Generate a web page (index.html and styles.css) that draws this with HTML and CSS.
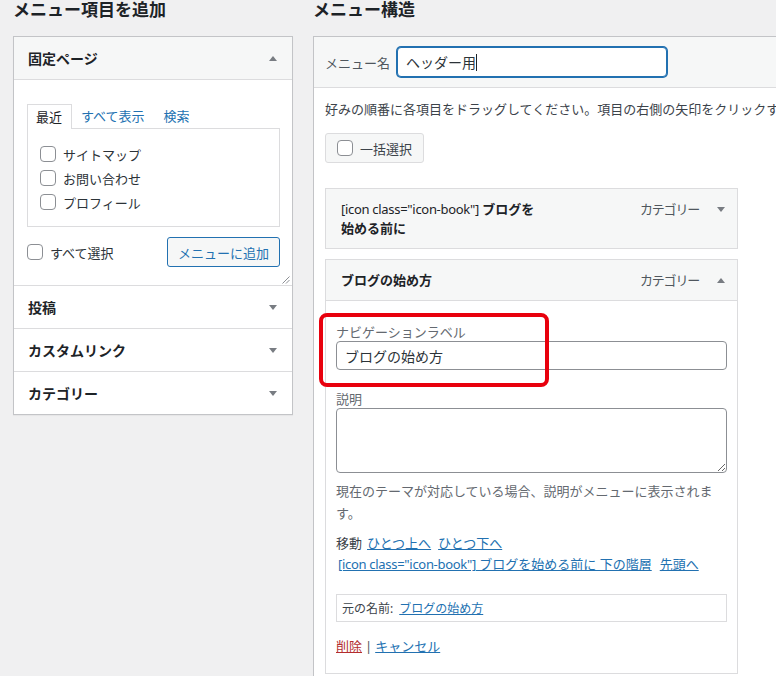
FILE: index.html
```html
<!DOCTYPE html>
<html lang="ja">
<head>
<meta charset="utf-8">
<title>メニュー</title>
<link rel="stylesheet" href="styles.css">
</head>
<body>
<div class="page">
  <div class="col-left">
    <h2 class="heading">メニュー項目を追加</h2>
    <div class="acc">
      <div class="acc-head open"><span>固定ページ</span><span class="tri up"></span></div>
      <div class="acc-body">
        <ul class="tabs">
          <li class="tab active">最近</li>
          <li class="tab"><a class="tab-link">すべて表示</a></li>
          <li class="tab"><a class="tab-link">検索</a></li>
        </ul>
        <div class="tab-panel">
          <label class="chk-row"><span class="cb"></span>サイトマップ</label>
          <label class="chk-row"><span class="cb"></span>お問い合わせ</label>
          <label class="chk-row"><span class="cb"></span>プロフィール</label>
        </div>
        <div class="add-actions">
          <label class="chk-row"><span class="cb"></span>すべて選択</label>
          <button class="btn-add">メニューに追加</button>
        </div>
        <svg class="grip" width="8" height="8" viewBox="0 0 8 8"><path d="M7.5 0.5 L0.5 7.5 M7.5 4 L4 7.5" stroke="#8c8f94" stroke-width="1" fill="none"/></svg>
      </div>
      <div class="acc-head"><span>投稿</span><span class="tri down"></span></div>
      <div class="acc-head"><span>カスタムリンク</span><span class="tri down"></span></div>
      <div class="acc-head last"><span>カテゴリー</span><span class="tri down"></span></div>
    </div>
  </div>

  <div class="col-right">
    <h2 class="heading">メニュー構造</h2>
    <div class="menu-box">
      <div class="menu-head">
        <span class="menu-name-label">メニュー名</span>
        <div class="menu-name-input">ヘッダー用<span class="caret"></span></div>
      </div>
      <div class="menu-body">
        <p class="drag-hint">好みの順番に各項目をドラッグしてください。項目の右側の矢印をクリックすると、追加の設定オプションが表示されます。</p>
        <div class="bulk-btn"><span class="cb"></span>一括選択</div>

        <div class="item">
          <div class="item-head">
            <div class="item-title"><span class="latin">[icon class="icon-book"]</span> ブログを<br>始める前に</div>
            <span class="item-type">カテゴリー</span>
            <span class="tri down"></span>
          </div>
        </div>

        <div class="item second">
          <div class="item-head">
            <div class="item-title">ブログの始め方</div>
            <span class="item-type">カテゴリー</span>
            <span class="tri up"></span>
          </div>
          <div class="item-panel">
            <div class="field-label">ナビゲーションラベル</div>
            <div class="text-input">ブログの始め方</div>
            <div class="field-label gap">説明</div>
            <textarea class="textarea"></textarea>
            <p class="desc">現在のテーマが対応している場合、説明がメニューに表示されます。</p>
            <div class="move">
              <div class="move-line"><span class="move-label">移動</span><a class="link l-gap">ひとつ上へ</a><a class="link">ひとつ下へ</a></div>
              <div class="move-line indent"><a class="link"><span class="latin-s">[icon class="icon-book"]</span> ブログを始める前に 下の階層</a><a class="link l-gap2">先頭へ</a></div>
            </div>
            <div class="orig">元の名前:<a class="link orig-link">ブログの始め方</a></div>
            <div class="item-actions"><a class="link del">削除</a><span class="sep">|</span><a class="link">キャンセル</a></div>
            <div class="highlight"></div>
          </div>
        </div>
      </div>
    </div>
  </div>
</div>
</body>
</html>
```

FILE: styles.css
```css
html, body {
  margin: 0;
  padding: 0;
  overflow: hidden;
  background: #f0f0f1;
}

body {
  font-family: "Noto Sans", "Noto Sans CJK JP", sans-serif;
  font-size: 13px;
  color: #1d2327;
  width: 776px;
  height: 676px;
}

.page {
  display: flex;
  align-items: flex-start;
  padding-left: 13px;
  gap: 20px;
}

.heading {
  margin: 0 0 16px;
  font-size: 17px;
  line-height: 20px;
  font-weight: 700;
  color: #1d2327;
}

/* ---------- left column ---------- */
.col-left {
  width: 280px;
  flex: none;
}

.acc {
  background: #fff;
  border: 1px solid #c3c4c7;
  box-shadow: 0 1px 1px rgba(0, 0, 0, 0.04);
}

.acc-head {
  height: 42px;
  display: flex;
  align-items: center;
  justify-content: space-between;
  padding: 0 15px 0 14px;
  border-bottom: 1px solid #dcdcde;
  font-size: 14px;
  font-weight: 700;
  color: #1d2327;
  background: #fff;
}

.acc-head.open {
  background: #f6f7f7;
}

.acc-head.last {
  border-bottom: none;
}

.tri {
  display: inline-block;
  width: 0;
  height: 0;
  border-left: 4px solid transparent;
  border-right: 4px solid transparent;
}

.tri.up {
  border-bottom: 5px solid #787c82;
}

.tri.down {
  border-top: 5px solid #787c82;
}

.acc-body {
  position: relative;
  padding: 24px 12px 18px 13px;
  border-bottom: 1px solid #dcdcde;
}

.tabs {
  display: flex;
  margin: 0;
  padding: 0;
  list-style: none;
}

.tab {
  padding: 0 10px 0 9px;
  line-height: 24px;
  font-size: 13px;
}

.tab.active {
  padding: 0 9px 0 8px;
  border: 1px solid #dcdcde;
  border-bottom: none;
  background: #fff;
  position: relative;
  margin-bottom: -1px;
  line-height: 24px;
  color: #1d2327;
}

.tab-link {
  color: #2271b1;
}

.tab-panel {
  border: 1px solid #dcdcde;
  padding: 13px 12px 12px;
}

.chk-row {
  display: flex;
  align-items: center;
  gap: 7px;
  height: 24px;
  font-size: 13px;
  color: #2c3338;
}

.cb {
  display: inline-block;
  box-sizing: border-box;
  width: 16px;
  height: 16px;
  border: 1px solid #8c8f94;
  border-radius: 4px;
  background: #fff;
  flex: none;
}

.add-actions {
  display: flex;
  align-items: center;
  justify-content: space-between;
  margin-top: 10px;
}

.btn-add {
  height: 30px;
  box-sizing: border-box;
  padding: 0 10px;
  border: 1px solid #2271b1;
  border-radius: 3px;
  background: #f6f7f7;
  color: #2271b1;
  font-family: inherit;
  font-size: 13px;
}

.grip {
  position: absolute;
  right: 2px;
  bottom: 1px;
}

/* ---------- right column ---------- */
.col-right {
  flex: none;
  width: 600px;
}

.menu-box {
  background: #fff;
  border: 1px solid #c3c4c7;
  padding-bottom: 40px;
}

.menu-head {
  display: flex;
  align-items: center;
  gap: 7px;
  padding: 10px 11px;
  background: #f6f7f7;
  border-bottom: 1px solid #dcdcde;
}

.menu-name-label {
  font-size: 13px;
  color: #50575e;
}

.menu-name-input {
  box-sizing: border-box;
  width: 270px;
  height: 30px;
  display: flex;
  align-items: center;
  padding: 0 8px;
  border: 1px solid #2271b1;
  box-shadow: 0 0 0 1px #2271b1;
  border-radius: 4px;
  background: #fff;
  font-size: 14px;
  color: #2c3338;
}

.caret {
  display: inline-block;
  width: 1px;
  height: 17px;
  background: #1d2327;
}

.menu-body {
  padding: 0 11px;
}

.drag-hint {
  margin: 11px 0 14px;
  line-height: 20px;
  white-space: nowrap;
  color: #3c434a;
}

.bulk-btn {
  display: flex;
  align-items: center;
  gap: 7px;
  width: fit-content;
  height: 30px;
  box-sizing: border-box;
  padding: 0 11px;
  background: #f6f7f7;
  border: 1px solid #dcdcde;
  border-radius: 3px;
  color: #3c434a;
}

.item {
  width: 413px;
  margin-top: 25px;
}

.item.second {
  margin-top: 10px;
}

.item-head {
  display: flex;
  align-items: center;
  padding: 11px 12px 10px 15px;
  background: #f6f7f7;
  border: 1px solid #dcdcde;
}

.item-title {
  flex: 1;
  font-size: 13px;
  font-weight: 700;
  line-height: 19px;
  color: #1d2327;
}

.latin {
  font-weight: 400;
  letter-spacing: -0.3px;
}

.latin-s {
  letter-spacing: -0.3px;
}

.item-type {
  color: #50575e;
  font-size: 13px;
  letter-spacing: -1.2px;
  margin-right: 18px;
  align-self: flex-start;
  line-height: 19px;
}

.item-head .tri {
  align-self: flex-start;
  margin-top: 7px;
}

.item-panel {
  position: relative;
  border: 1px solid #dcdcde;
  border-top: none;
  padding: 22px 10px 17px;
}

.field-label {
  font-size: 13px;
  line-height: 18px;
  color: #646970;
}

.field-label.gap {
  margin-top: 20px;
}

.text-input {
  box-sizing: border-box;
  height: 29px;
  display: flex;
  align-items: center;
  padding: 0 8px;
  border: 1px solid #8c8f94;
  border-radius: 4px;
  font-size: 14px;
  color: #2c3338;
}

.textarea {
  display: block;
  box-sizing: border-box;
  width: 100%;
  height: 65px;
  margin: 0;
  border: 1px solid #8c8f94;
  border-radius: 4px;
  font-family: inherit;
}

.desc {
  margin: 7px 0 0;
  width: 384px;
  line-height: 22px;
  color: #646970;
}

.move {
  margin-top: 9px;
  line-height: 21px;
}

.move-line {
  display: flex;
  align-items: baseline;
}

.move-line.indent {
  padding-left: 2px;
}

.move-label {
  color: #3c434a;
  margin-right: 5px;
}

.link {
  color: #2271b1;
  text-decoration: underline;
}

.l-gap {
  margin-right: 7px;
}

.l-gap2 {
  margin-left: 8px;
}

.orig {
  box-sizing: border-box;
  height: 28px;
  margin-top: 19px;
  display: flex;
  align-items: center;
  padding: 0 5px;
  border: 1px solid #dcdcde;
  font-size: 12px;
  color: #3c434a;
}

.orig-link {
  margin-left: 6px;
}

.item-actions {
  margin-top: 14px;
  line-height: 20px;
  color: #3c434a;
}

.sep {
  margin: 0 3px;
  color: #50575e;
}

.link.del {
  color: #b32d2e;
}

.highlight {
  position: absolute;
  left: -7px;
  top: 12px;
  width: 230px;
  height: 74px;
  box-sizing: border-box;
  border: 4px solid #e8000d;
  border-radius: 8px;
}
```
